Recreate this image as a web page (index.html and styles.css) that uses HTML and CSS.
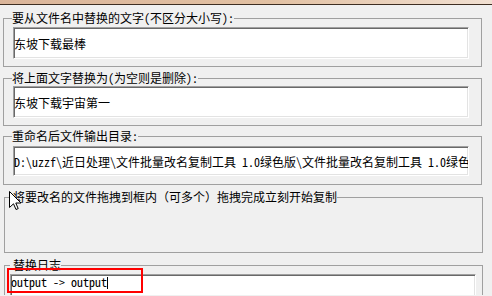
FILE: index.html
```html
<!DOCTYPE html>
<html lang="zh">
<head>
    <meta charset="UTF-8">
    <title>文件批量改名复制工具</title>
    <link rel="stylesheet" href="styles.css">
</head>
<body>
    <div class="titlebar"></div>

    <fieldset class="group g-find">
        <legend>要从文件名中替换的文字(不区分大小写):</legend>
        <input class="edit" type="text" value="东坡下载最棒">
    </fieldset>

    <fieldset class="group g-replace">
        <legend>将上面文字替换为(为空则是删除):</legend>
        <input class="edit" type="text" value="东坡下载宇宙第一">
    </fieldset>

    <fieldset class="group g-output">
        <legend>重命名后文件输出目录:</legend>
        <input class="edit edit-short" type="text" value="D:\uzzf\近日处理\文件批量改名复制工具 1.0绿色版\文件批量改名复制工具 1.0绿色版">
    </fieldset>

    <fieldset class="group g-drop">
        <legend>将要改名的文件拖拽到框内（可多个）拖拽完成立刻开始复制</legend>
    </fieldset>

    <fieldset class="group g-log">
        <legend>替换日志</legend>
        <div class="log">output -&gt; output<span class="caret"></span></div>
    </fieldset>

    <!-- 标注框 -->
    <div class="highlight"></div>

    <!-- 鼠标指针 -->
    <svg class="cursor" width="13" height="20" viewBox="0 0 13 20">
        <path d="M0.5 0.5 V16.5 L4.5 12.8 L7 18.5 L9.2 17.6 L6.8 12 H12 Z" fill="#fff" stroke="#000" stroke-linejoin="miter"/>
    </svg>
</body>
</html>
```

FILE: styles.css
```css
body {
    font-family: "Noto Sans Mono CJK SC", "Noto Sans CJK SC", monospace;
    font-size: 12px;
    margin: 0;
    height: 296px;
    overflow: hidden;
    position: relative;
    background-color: #f0f0f0;
    color: #000;
}
.titlebar {
    height: 4px;
    background: linear-gradient(to right, #dab59a, #e2c1a3 55%, #f1e0d2);
    border-bottom: 1px solid #3e2e22;
}
.group {
    box-sizing: border-box;
    width: 479px;
    margin: 0 0 0 3px;
    padding: 2px 13px 7px 9px;
    border: 1px solid #a0a0a0;
    min-width: 0;
}
legend {
    padding: 0;
    margin-left: -1px;
    line-height: 14px;
    font-size: 12px;
    white-space: nowrap;
}
.g-find {
    margin-top: 6px;
}
.g-replace {
    margin-top: 4px;
    padding-top: 1px;
}
.g-output {
    margin-top: 3px;
    padding-top: 3px;
    padding-bottom: 8px;
}
.g-drop {
    margin: 5px 0 0 4px;
    height: 63px;
}
.g-log {
    margin: 5px 0 0 4px;
    padding: 2px 0 0 5px;
    border-bottom: 0;
}
.g-log legend {
    margin-left: 0;
    padding-left: 3px;
}
.edit {
    display: block;
    box-sizing: border-box;
    width: 456px;
    height: 32px;
    margin: 0;
    padding: 0;
    font: inherit;
    color: #000;
    background: #fff;
    border: 1px solid;
    border-color: #a0a0a0 #fff #fff #a0a0a0;
    box-shadow: inset 1px 1px 0 #696969, inset -1px -1px 0 #e3e3e3;
    outline: none;
}
.edit-short {
    height: 30px;
}
/* 日志框下半部分在窗口外，不画下边框 */
.log {
    box-sizing: border-box;
    width: 466px;
    height: 21px;
    line-height: 14px;
    padding: 0;
    background: #fff;
    border: 1px solid;
    border-color: #a0a0a0 #fff #fff #a0a0a0;
    border-bottom: 0;
    box-shadow: inset 1px 1px 0 #696969, inset -1px 0 0 #e3e3e3;
    white-space: pre;
    overflow: hidden;
}
.caret {
    display: inline-block;
    width: 1px;
    height: 12px;
    background: #000;
    vertical-align: -2px;
}
.highlight {
    position: absolute;
    left: 7px;
    top: 268px;
    width: 136px;
    height: 25px;
    box-sizing: border-box;
    border: 2px solid #ff0000;
}
.cursor {
    position: absolute;
    left: 9px;
    top: 191px;
}
```
